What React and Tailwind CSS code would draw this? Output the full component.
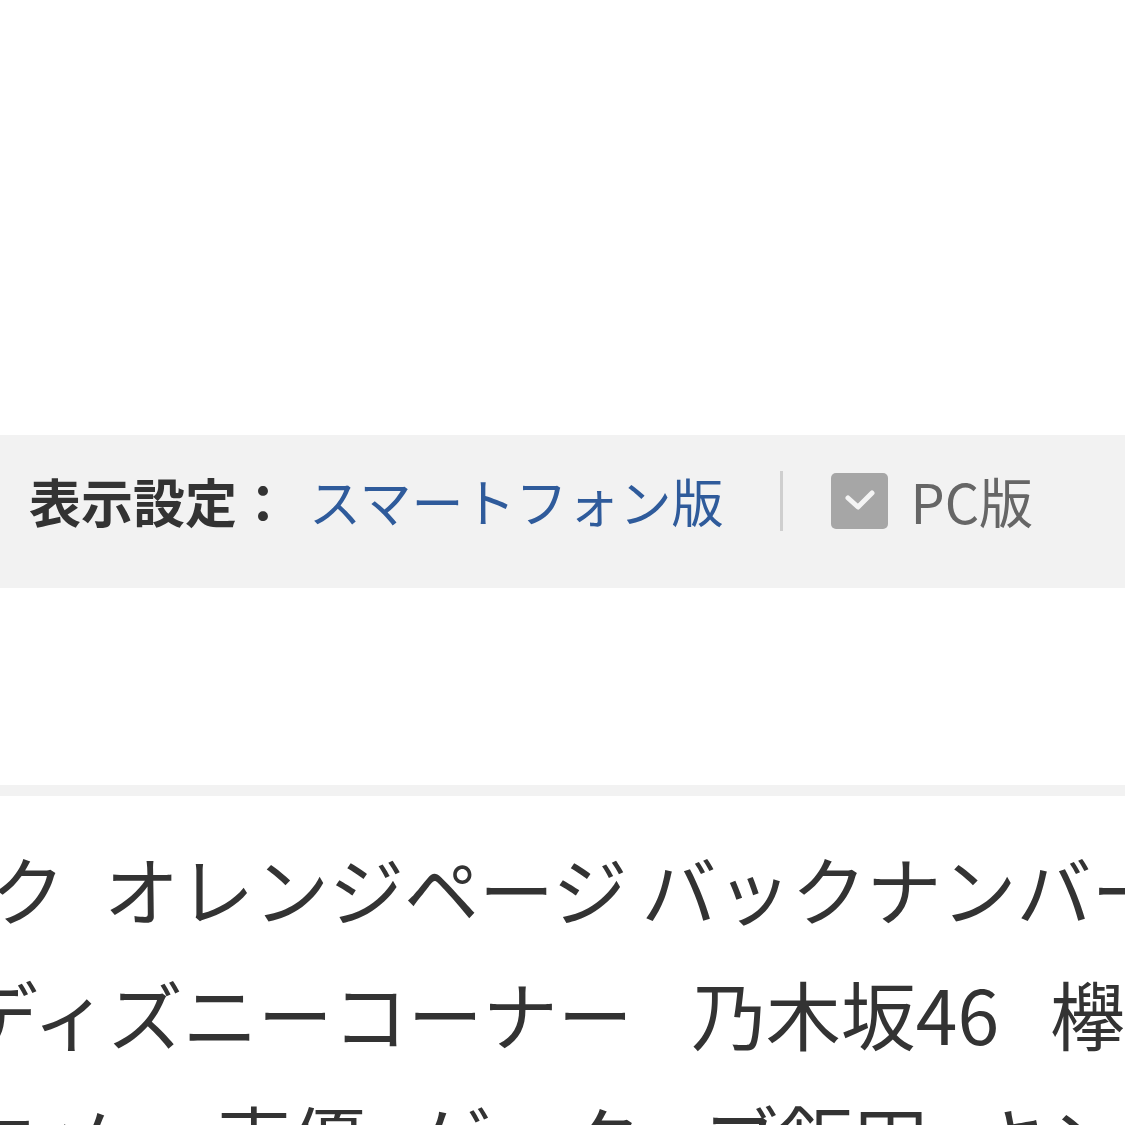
import React from "react";

const font = { fontFamily: '"Noto Sans CJK JP", "Noto Sans", sans-serif' };

function CheckBox() {
  return (
    <span className="inline-flex h-[56px] w-[57px] items-center justify-center rounded-[5px] bg-[#a6a6a6]">
      <svg width="34" height="24" viewBox="0 0 34 24">
        <path
          d="M5 9 L15 18 L29 4"
          fill="none"
          stroke="#f4f4f4"
          strokeWidth="5"
          strokeLinecap="round"
          strokeLinejoin="round"
        />
      </svg>
    </span>
  );
}

function App() {
  return (
    <div className="min-h-screen w-full overflow-hidden bg-white" style={font}>
      <div className="h-[435px]" />

      {/* display setting bar */}
      <div className="flex h-[153px] items-center bg-[#f2f2f2] pb-[21px] pl-[29px]">
        <span className="text-[52px] font-bold leading-none text-[#333]">
          表示設定：
        </span>
        <a className="ml-[20px] text-[52px] leading-none text-[#2f5b9b]">
          スマートフォン版
        </a>
        <span className="ml-[57px] h-[60px] w-[3px] bg-[#cfcfcf]" />
        <span className="ml-[48px] flex items-center">
          <CheckBox />
          <span className="ml-[22px] text-[54px] leading-none text-[#666]">
            PC版
          </span>
        </span>
      </div>

      <div className="h-[197px]" />
      <div className="h-[11px] bg-[#f2f2f2]" />

      {/* keyword links */}
      <div className="pt-[29px] text-[75px] leading-[125px] text-[#333]">
        <div className="-ml-[10px] flex whitespace-nowrap">
          <span>ク</span>
          <span className="ml-[39px]">オレンジページ</span>
          <span className="ml-[14px]">バックナンバー</span>
        </div>
        <div className="-ml-[37px] flex whitespace-nowrap">
          <span>ディズニーコーナー</span>
          <span className="ml-[58px]">乃木坂46</span>
          <span className="ml-[51px]">欅坂46</span>
        </div>
        <div className="-ml-[105px] flex whitespace-nowrap">
          <span>アニメ</span>
          <span className="ml-[98px]">声優</span>
          <span className="ml-[50px]">ゲック</span>
          <span className="ml-[62px]">ブ飯田</span>
          <span className="ml-[48px]">キング</span>
        </div>
      </div>
    </div>
  );
}

export default App;
